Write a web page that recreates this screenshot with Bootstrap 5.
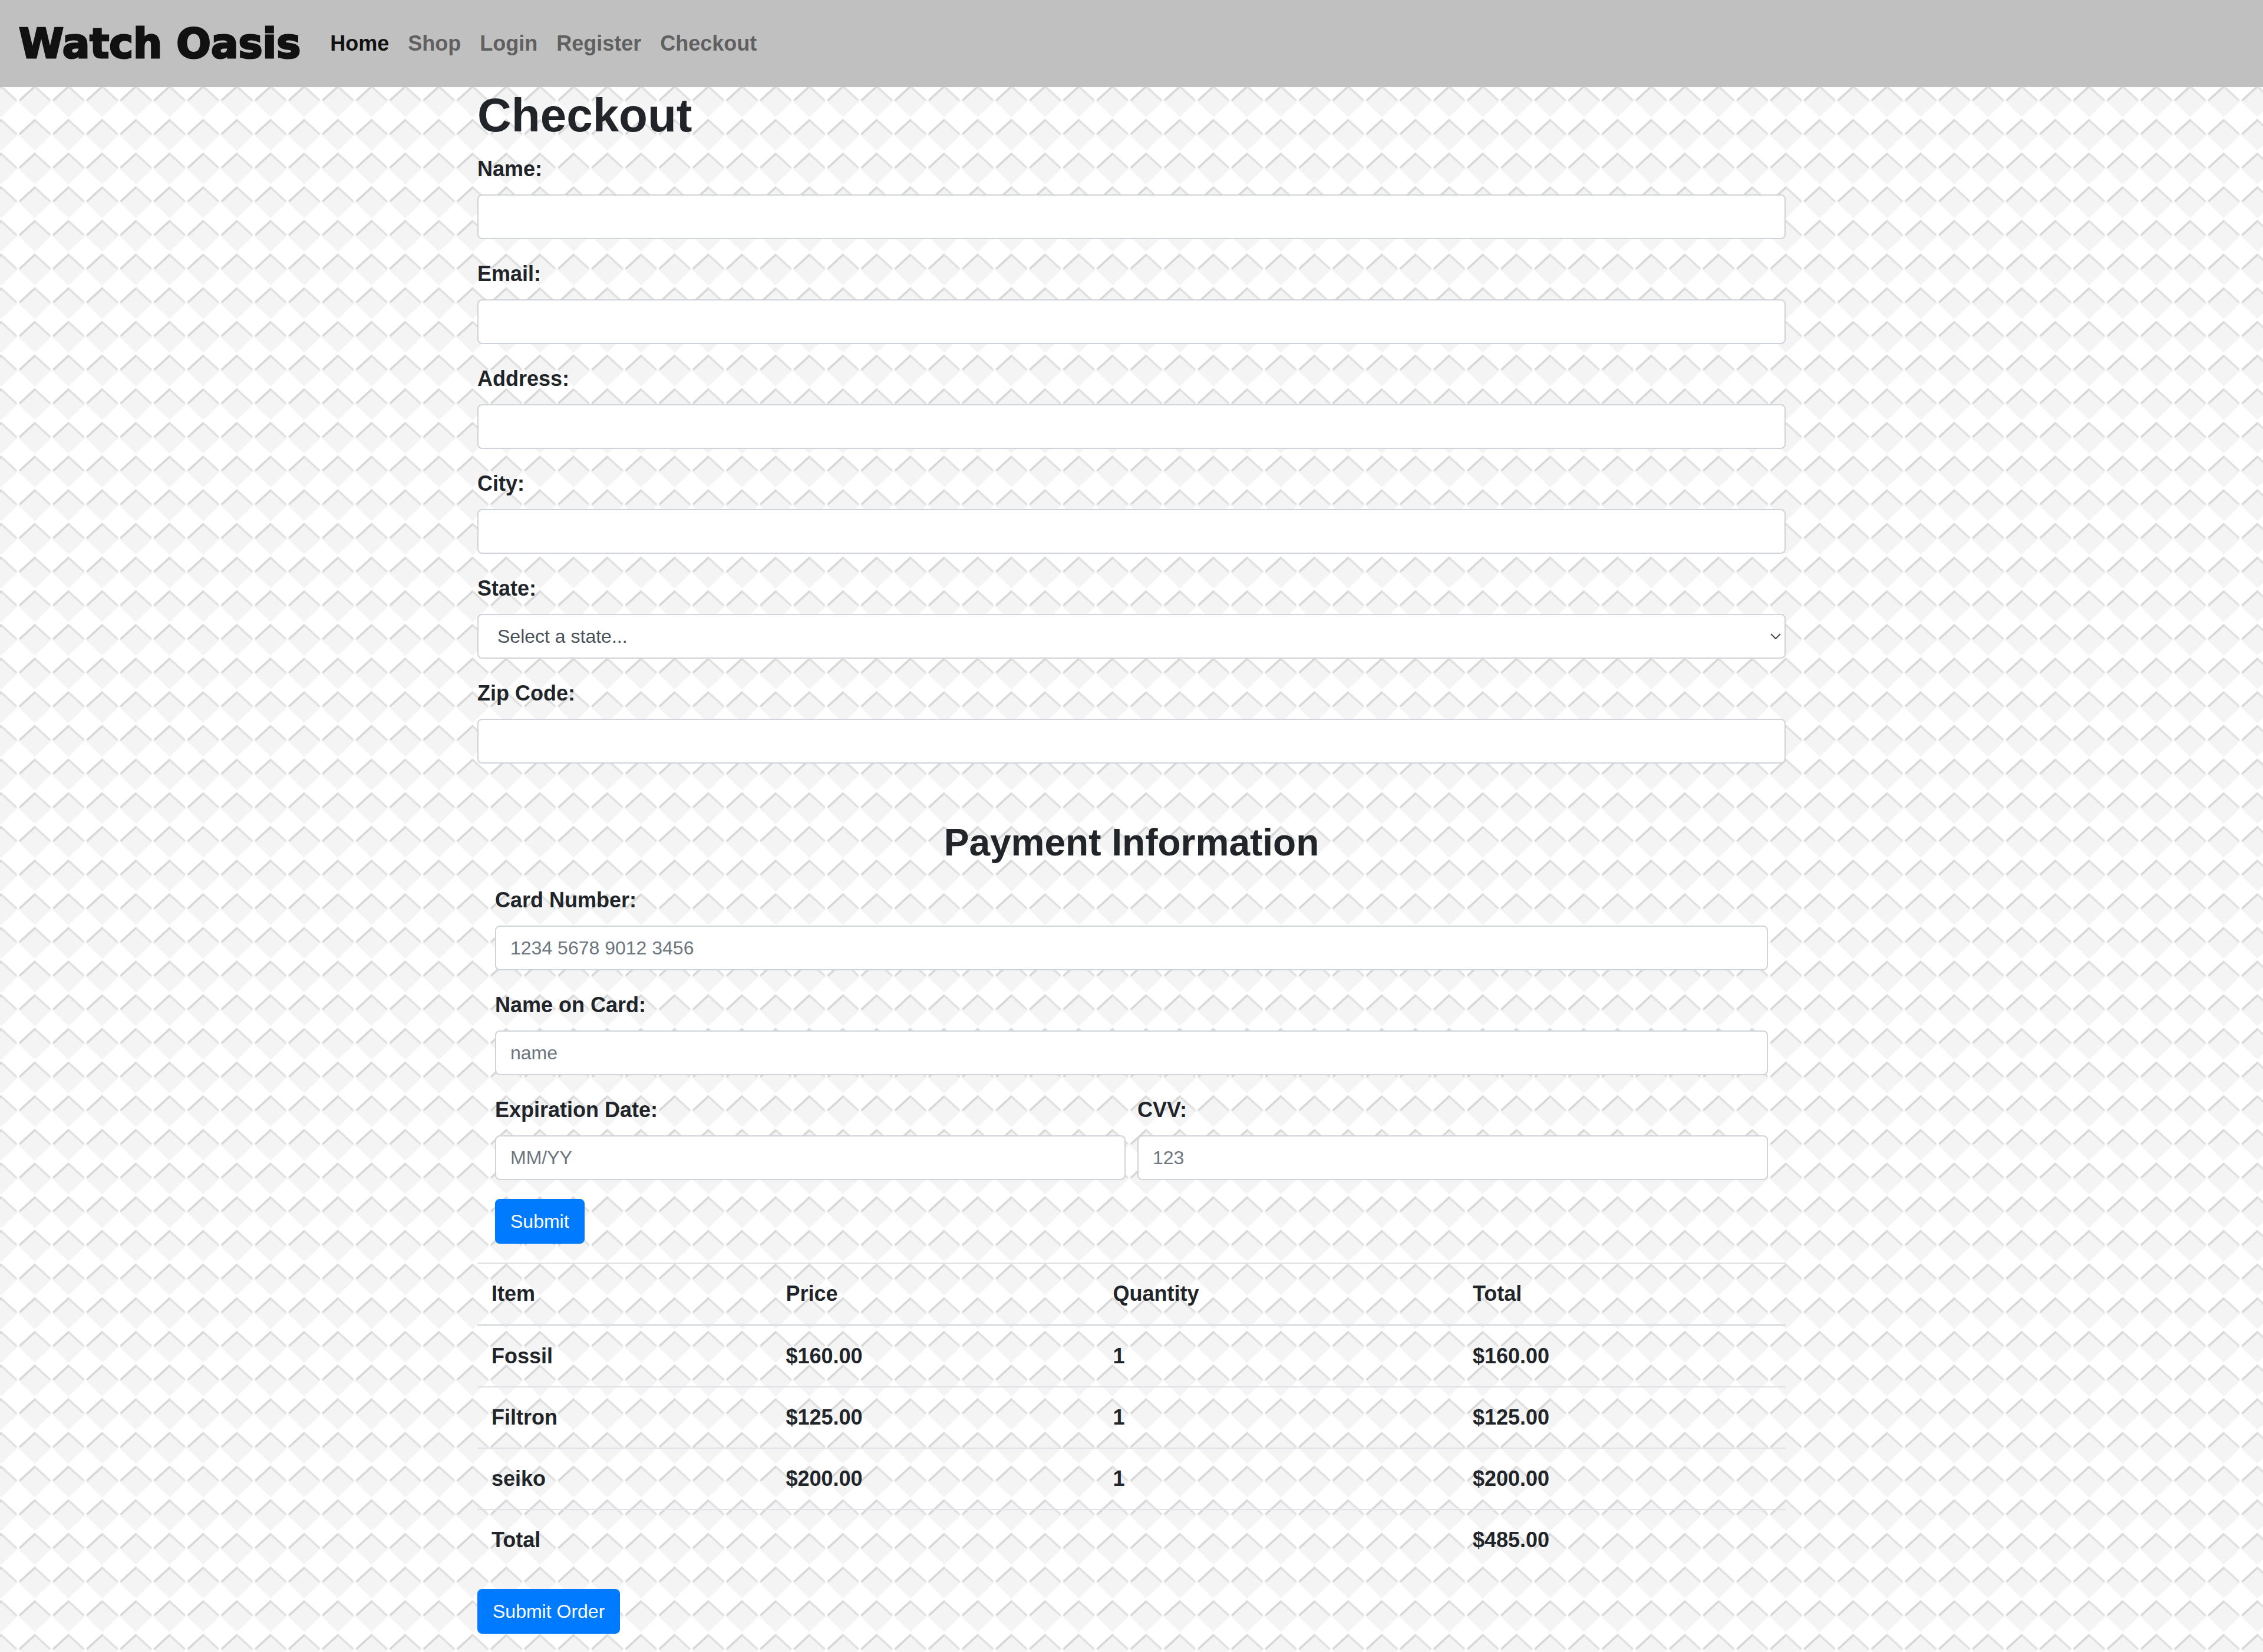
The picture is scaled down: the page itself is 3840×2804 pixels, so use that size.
<!DOCTYPE html>
<html lang="en">
<head>
<meta charset="utf-8">
<meta name="viewport" content="width=device-width, initial-scale=1">
<title>Watch Oasis - Checkout</title>
<link href="https://cdn.jsdelivr.net/npm/bootstrap@5.3.0/dist/css/bootstrap.min.css" rel="stylesheet">
<style>
  :root { font-size: 32px; --bs-border-width: 2px; }
  body {
    min-height: 100vh;
    font-family: "Liberation Sans", Helvetica, Arial, sans-serif;
    font-size: 36px;
    font-weight: 700;
    line-height: 1.5;
    color: #212529;
    background-color: #fff;
    background-image: url("data:image/svg+xml,%3Csvg xmlns='http://www.w3.org/2000/svg' width='400' height='400' viewBox='0 0 140 140'%3E%3Cdefs%3E%3Cpattern id='p' width='20' height='20' patternUnits='userSpaceOnUse'%3E%3Cpath d='M0 0H10L0 9.6ZM20 0H10L20 9.6ZM0 20V11L10 20ZM20 20V11L10 20Z' fill='%23f4f4f4'/%3E%3Cpath d='M-.4 11L9.1 19.7' stroke='%23e0e0e0' stroke-width='1.2'/%3E%3Cpath d='M20.4 11L10.9 19.7' stroke='%23d6d6d6' stroke-width='1.2'/%3E%3C/pattern%3E%3C/defs%3E%3Crect width='140' height='140' fill='url(%23p)'/%3E%3C/svg%3E");
    background-size: 400px 400px;
    background-position: 2px 0;
  }
  h1, h2 { font-weight: 700; }
  .site-nav { background: #c0c0c0; min-height: 148px; padding: 16px 32px; }
  .site-nav .navbar-brand {
    font-family: "DejaVu Sans", sans-serif;
    font-size: 69px; line-height: 80px; font-weight: 700;
    color: #111; -webkit-text-stroke: 3px #111;
    padding: 0; margin-right: 34px;
  }
  .site-nav .nav-link { padding: 8px 16px; color: #606060; }
  .site-nav .nav-link.active { color: #111; }
  .page-box { max-width: 2280px; padding: 0 30px 31px; }
  .form-label { display: block; margin-bottom: 16px; font-size: 36px; }
  .form-control, .form-select {
    font-weight: 400; color: #495057; background-color: #fff;
    border: 2px solid #ced4da; border-radius: 8px;
  }
  .form-control::placeholder { color: #6c757d; }
  .form-select {
    padding-left: 32px;
    background-image: url("data:image/svg+xml,%3Csvg xmlns='http://www.w3.org/2000/svg' viewBox='0 0 18 10'%3E%3Cpath d='M1 1L9 9L17 1' fill='none' stroke='%23444' stroke-width='2'/%3E%3C/svg%3E");
    background-size: 18px 10px; background-position: right 6px center;
  }
  .pay-title { margin: 64px 0 32px; }
  .pay-form { padding: 0 30px; }
  .pay-row { --bs-gutter-x: 20px; }
  .btn-primary {
    --bs-btn-bg: #007bff; --bs-btn-border-color: #007bff;
    --bs-btn-border-radius: 8px;
  }
  .order-table {
    --bs-table-bg: transparent; --bs-table-color: #212529;
    --bs-table-border-color: #dee2e6;
    table-layout: fixed; color: #212529; border-color: #dee2e6;
  }
  .order-table > :not(caption) > * > * {
    padding: 24px; background: transparent;
    border-width: 2px 0 0; border-top-color: #dee2e6;
  }
  .order-table > thead > tr > th { border-bottom: 4px solid #dee2e6; }
  .col-item { width: 22.5%; } .col-price { width: 25%; }
  .col-qty { width: 27.5%; } .col-total { width: 25%; }
</style>
</head>
<body>
<nav class="navbar navbar-expand site-nav">
  <a class="navbar-brand" href="#">Watch Oasis</a>
  <ul class="navbar-nav">
    <li class="nav-item"><a class="nav-link active" href="#" aria-current="page">Home</a></li>
    <li class="nav-item"><a class="nav-link" href="#">Shop</a></li>
    <li class="nav-item"><a class="nav-link" href="#">Login</a></li>
    <li class="nav-item"><a class="nav-link" href="#">Register</a></li>
    <li class="nav-item"><a class="nav-link" href="#">Checkout</a></li>
  </ul>
</nav>
<main class="container page-box">
  <h1 class="mb-2">Checkout</h1>
  <form>
    <div class="mb-3"><label class="form-label" for="name">Name:</label><input class="form-control" type="text" id="name"></div>
    <div class="mb-3"><label class="form-label" for="email">Email:</label><input class="form-control" type="email" id="email"></div>
    <div class="mb-3"><label class="form-label" for="address">Address:</label><input class="form-control" type="text" id="address"></div>
    <div class="mb-3"><label class="form-label" for="city">City:</label><input class="form-control" type="text" id="city"></div>
    <div class="mb-3"><label class="form-label" for="state">State:</label><select class="form-select" id="state"><option>Select a state...</option></select></div>
    <div class="pb-3"><label class="form-label" for="zip">Zip Code:</label><input class="form-control" type="text" id="zip"></div>
  </form>
  <h2 class="pay-title text-center">Payment Information</h2>
  <form class="pay-form">
    <div class="mb-3"><label class="form-label" for="card">Card Number:</label><input class="form-control" type="text" id="card" placeholder="1234 5678 9012 3456"></div>
    <div class="mb-3"><label class="form-label" for="holder">Name on Card:</label><input class="form-control" type="text" id="holder" placeholder="name"></div>
    <div class="row pay-row mb-3">
      <div class="col"><label class="form-label" for="exp">Expiration Date:</label><input class="form-control" type="text" id="exp" placeholder="MM/YY"></div>
      <div class="col"><label class="form-label" for="cvv">CVV:</label><input class="form-control" type="text" id="cvv" placeholder="123"></div>
    </div>
    <button class="btn btn-primary d-block mb-3" type="submit">Submit</button>
  </form>
  <table class="table order-table mb-3">
    <colgroup><col class="col-item"><col class="col-price"><col class="col-qty"><col class="col-total"></colgroup>
    <thead><tr><th scope="col">Item</th><th scope="col">Price</th><th scope="col">Quantity</th><th scope="col">Total</th></tr></thead>
    <tbody>
      <tr><td>Fossil</td><td>$160.00</td><td>1</td><td>$160.00</td></tr>
      <tr><td>Filtron</td><td>$125.00</td><td>1</td><td>$125.00</td></tr>
      <tr><td>seiko</td><td>$200.00</td><td>1</td><td>$200.00</td></tr>
      <tr><td colspan="3">Total</td><td>$485.00</td></tr>
    </tbody>
  </table>
  <button class="btn btn-primary d-block" type="button">Submit Order</button>
</main>
<script src="https://cdn.jsdelivr.net/npm/bootstrap@5.3.0/dist/js/bootstrap.bundle.min.js"></script>
</body>
</html>
